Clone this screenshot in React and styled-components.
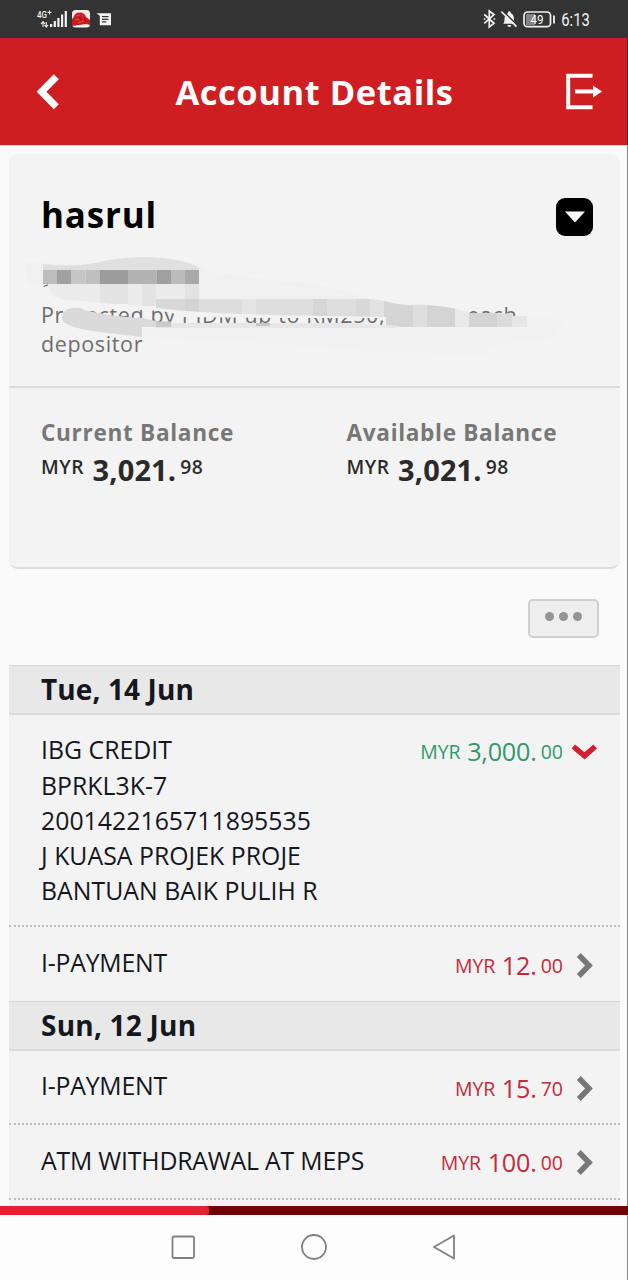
import React from "react";
import styled, { createGlobalStyle } from "styled-components";

const GlobalStyle = createGlobalStyle`
  * { box-sizing: border-box; }
  html, body { margin: 0; padding: 0; }
  body { background: #fafafa; font-family: "Open Sans", "Noto Sans", sans-serif; }
`;

const Screen = styled.div`
  width: 628px;
  height: 1280px;
  display: flex;
  flex-direction: column;
  overflow: hidden;
  background: #fafafa;
`;

const StatusBar = styled.div`
  height: 38px;
  flex: none;
  display: flex;
  justify-content: space-between;
  background: #333333;
`;

const StatusSvg = styled.svg`
  display: block;
  font-family: Roboto, sans-serif;
`;

const Header = styled.header`
  height: 107px;
  flex: none;
  display: flex;
  align-items: center;
  justify-content: space-between;
  padding: 0 25px 0 37px;
  background: #cf1e21;
  border-right: 1px solid #7d1316;
`;

const Title = styled.h1`
  margin: 0 0 0 3px;
  color: #fff;
  font-size: 34.5px;
  line-height: 46px;
  font-weight: 700;
  letter-spacing: 0.55px;
`;

const HeaderIcon = styled.svg`
  display: block;
  margin-top: 1px;
`;

const Content = styled.main`
  flex: 1;
  min-height: 0;
  overflow: hidden;
  padding: 8px 7px 0 9px;
  border-top: 1px solid #ffd4d6;
  border-right: 1px solid #808080;
`;

const Card = styled.section`
  position: relative;
  height: 415px;
  background: #f3f3f3;
  border-radius: 9px;
  border-bottom: 2px solid #dcdcdc;
`;

const CardTop = styled.div`
  height: 234px;
  padding: 36px 27px 0 32px;
  border-bottom: 2px solid #dcdcdc;
`;

const NameRow = styled.div`
  display: flex;
  justify-content: space-between;
  align-items: flex-start;
`;

const Name = styled.h2`
  margin: 0;
  color: #000;
  font-size: 35px;
  line-height: 50px;
  font-weight: 700;
  letter-spacing: 0.8px;
`;

const DropButton = styled.button`
  width: 37px;
  height: 38px;
  margin-top: 8px;
  padding: 0;
  border: 0;
  border-radius: 9px;
  background: #000;
  display: flex;
  align-items: center;
  justify-content: center;
`;

const Protection = styled.p`
  margin: 60px 0 0;
  width: 490px;
  white-space: nowrap;
  color: #6e6e6e;
  font-size: 21.5px;
  line-height: 29px;
  letter-spacing: 0.63px;
`;

const Smudge = styled.svg`
  position: absolute;
  left: 11px;
  top: 96px;
  pointer-events: none;
`;

const Balances = styled.div`
  display: grid;
  grid-template-columns: 305.5px 1fr;
  padding: 28px 0 0 32px;
`;

const BalanceLabel = styled.div`
  color: #777777;
  font-size: 22.6px;
  line-height: 34px;
  font-weight: 700;
  letter-spacing: 0.68px;
`;

const Amount = styled.div`
  display: flex;
  align-items: flex-start;
  white-space: nowrap;
  color: ${(p) => p.$color};
`;

const Small = styled.span`
  font-size: ${(p) => (p.$strong ? 19.3 : 19.5)}px;
  font-weight: ${(p) => (p.$strong ? 600 : 400)};
  line-height: 28px;
  padding-top: ${(p) => (p.$strong ? 3 : 5)}px;
  letter-spacing: ${(p) => (p.$strong ? 0.5 : 0)}px;
`;

const Big = styled.span`
  font-size: ${(p) => (p.$strong ? 29 : 25.2)}px;
  font-weight: ${(p) => (p.$strong ? 700 : 400)};
  line-height: ${(p) => (p.$strong ? 40 : 36)}px;
  margin: 0 4px 0 ${(p) => (p.$strong ? 8.5 : 6.5)}px;
  letter-spacing: ${(p) => (p.$strong ? 0.15 : -0.2)}px;
`;

const Toolbar = styled.div`
  height: 96px;
  display: flex;
  justify-content: flex-end;
  padding: 30px 21px 0 0;
`;

const MoreButton = styled.button`
  width: 71px;
  height: 39px;
  padding: 0 0 4px;
  border: 2px solid #cfcfcf;
  border-radius: 5px;
  background: #eeeeee;
  display: flex;
  align-items: center;
  justify-content: center;
  gap: 5px;
`;

const Dot = styled.span`
  width: 9px;
  height: 9px;
  border-radius: 50%;
  background: #949494;
`;

const DateBar = styled.div`
  height: 50px;
  padding-left: 32px;
  border-top: 1px solid #d6d6d6;
  border-bottom: 2px solid #dbdbdb;
  background: #e8e8e8;
  color: #15171e;
  font-size: 28px;
  line-height: 47px;
  font-weight: 700;
  letter-spacing: ${(p) => p.$track}px;
`;

const Row = styled.div`
  display: flex;
  justify-content: space-between;
  align-items: flex-start;
  height: ${(p) => p.$height}px;
  padding: ${(p) => p.$top}px 23px 0 32px;
  background: #f3f3f3;
  border-bottom: ${(p) => (p.$last ? "0" : "2px dotted #bdbdbd")};
`;

const Desc = styled.div`
  color: #15171e;
  font-size: 24.8px;
  line-height: 35.2px;
  letter-spacing: ${(p) => p.$track}px;
  white-space: pre;
`;

const RowEnd = styled.div`
  display: flex;
  align-items: flex-start;
  padding-top: ${(p) => p.$drop}px;
`;

const Chevron = styled.svg`
  display: block;
  width: 27px;
  height: 27px;
  margin: 5px 0 0 7px;
`;

const ListTail = styled.div`
  height: 8px;
  background: #f3f3f3;
`;

const Progress = styled.div`
  flex: none;
  height: 9px;
  background: #700004;
`;

const ProgressFill = styled.div`
  width: 209px;
  height: 9px;
  background: #e81f2c;
  border-radius: 0 3px 3px 0;
`;

const NavBar = styled.nav`
  flex: none;
  height: 65px;
  display: flex;
  align-items: center;
  justify-content: center;
  gap: 104px;
  padding-bottom: 1px;
  background: #fdfdfd;
  border-right: 1px solid #858585;
`;

const GREEN = "#2f9a68";
const RED = "#c42a38";

function Money({ whole, cents, color, strong }) {
  return (
    <Amount $color={color}>
      <Small $strong={strong}>MYR</Small>
      <Big $strong={strong}>{whole}.</Big>
      <Small $strong={strong}>{cents}</Small>
    </Amount>
  );
}

function Transaction({ lines, whole, cents, credit, height, top, last, track = 0, drop = 1 }) {
  return (
    <Row $height={height} $top={top} $last={last}>
      <Desc $track={track}>{lines.join("\n")}</Desc>
      <RowEnd $drop={drop}>
        <Money whole={whole} cents={cents} color={credit ? GREEN : RED} />
        <Chevron viewBox="0 0 27 27" fill="none" strokeWidth="5.5">
          {credit ? (
            <path d="M3.300 8.500 14.500 17.800 25.200 8.500" stroke="#d51f2f" />
          ) : (
            <path d="M8.800 3 19 13.500 8.800 24" stroke="#777" />
          )}
        </Chevron>
      </RowEnd>
    </Row>
  );
}

function StatusLeft() {
  return (
    <StatusSvg width="130" height="38" viewBox="0 0 130 38" fill="#f2f2f2">
      <text x="37" y="18.300" fontSize="9.800" fontWeight="500" textLength="10" lengthAdjust="spacingAndGlyphs">4G</text>
      <path d="M47.500 12.400h4M49.500 10.400v4" stroke="#f2f2f2" strokeWidth="1" />
      <path d="M43 22v5M41 24l2-2.400 2 2.400M46.300 22v5M44.500 25l1.800 2.200 1.800-2.200" stroke="#f2f2f2" strokeWidth="1.100" fill="none" />
      <path d="M50 24h2.200v3H50zM53.700 21h2.200v6h-2.200zM57.300 18h2.200v9h-2.200zM61 14.500h2.200V27H61zM64.700 11h2.200v16h-2.200z" />
      <rect x="72" y="10" width="18" height="17.500" rx="3.500" fill="#f6eceb" />
      <path d="M72 19c2-1 2-5 5-6 4-1.500 8 0 9 4l4 3v5l-4-1-10 1.500-4 .5z" fill="#cb1a1e" />
      <path d="M76 16l4-1M75 20l5-1M82 14l2 5M78 23l6-2" stroke="#e8504d" strokeWidth="1" />
      <path d="M83 17c2 1 3 3 2 5M79 17l2 3" stroke="#8e0f13" strokeWidth="1" fill="none" />
      <path d="M76 26.200h3M80.500 26.200h3M85 26.200h2" stroke="#fff" strokeWidth="1.400" />
      <path d="M96.500 13.200H111v12H99.800v-9.500z" />
      <path d="M102 16.700h6.500M102 19.300h6.500M102 21.900h4.200" stroke="#333" strokeWidth="1.200" />
    </StatusSvg>
  );
}

function StatusRight() {
  return (
    <StatusSvg width="152" height="38" viewBox="476 0 152 38" fill="none" stroke="#f2f2f2">
      <path d="M484.300 14.500 494 23.300 489.300 27V11l4.700 3.600-9.700 8.800" strokeWidth="1.700" />
      <path d="M483.800 19h1.600M493.600 19h1.600" strokeWidth="1.500" />
      <path d="M503.200 23.700c1-1.200 1.300-2.200 1.300-4.700 0-3.200 1.500-5.200 3.300-5.800 0-2.500 3-2.500 3 0 2 .6 3.200 2.600 3.200 5.800 0 2.500.3 3.500 1.700 4.700z" fill="#f2f2f2" stroke="none" />
      <path d="M507.300 25h4c-.3 2.500-3.700 2.500-4 0z" fill="#f2f2f2" stroke="none" />
      <path d="M502.600 10.800 517.500 25.300" stroke="#333" strokeWidth="1.600" />
      <path d="M501.300 11.500 516.500 26.700" strokeWidth="1.700" />
      <rect x="526" y="14" width="9" height="11" fill="#858585" stroke="none" />
      <rect x="524" y="12" width="26.500" height="14.700" rx="3.500" strokeWidth="1.700" />
      <path d="M554 15.500v8" strokeWidth="1.800" />
      <text x="530.500" y="23.700" fontSize="12.500" fontWeight="400" fill="#fff" stroke="none" textLength="13" lengthAdjust="spacingAndGlyphs">49</text>
      <text x="561.300" y="26" fontSize="17.800" fontWeight="400" fill="#f2f2f2" stroke="none" textLength="28.500" lengthAdjust="spacingAndGlyphs">6:13</text>
    </StatusSvg>
  );
}

const TOP_TILES = [
  [43, 14, "#bdbdbd"], [57, 14, "#a1a1a1"], [71, 14.5, "#c6c6c6"], [85.5, 14, "#bfbfbf"],
  [99.5, 28.5, "#9c9c9c"], [128, 28.5, "#b3b3b3"], [156.5, 14.5, "#9f9f9f"],
  [171, 14, "#bbbbbb"], [185, 14, "#a9a9a9"],
];

const MID_TILES = [
  [156, 29, "#d8d8d8"], [185, 14, "#d3d3d3"], [199, 43, "#dddddd"], [242, 14, "#e4e4e4"],
  [256, 57, "#dedede"], [313, 14, "#d5d5d5"], [327, 29, "#dedede"], [356, 14, "#d8d8d8"],
  [370, 14, "#e2e2e2"], [384, 29, "#d4d4d4"], [413, 14, "#dedede"], [427, 28, "#d4d4d4"],
  [455, 14, "#e9e9e9"],
];

function SmudgeLayer() {
  return (
    <Smudge width="550" height="120" viewBox="20 250 550 120">
      <defs>
        <clipPath id="mid">
          <path d="M156 299H370C385 300 395 305 410 305C425 304 448 306 469 312V327H386V317L270 315C240 314 200 313 156 308Z" />
        </clipPath>
      </defs>
      <path d="M25 261C60 267 110 264 135 259 165 256 195 263 205 270L235 276 320 285 370 299H199V310L60 300C48 296 46 290 46 285L28 283Z" fill="#f0f0f0" />
      <path d="M43 264C70 267 85 265 100 262V270H43Z" fill="#dedede" />
      <path d="M99.500 262C120 257 150 256 171 259 185 261 193 264 199 268V270H99.500Z" fill="#e0e0e0" />
      {TOP_TILES.map(([x, w, c]) => <rect key={x} x={x} y="270" width={w} height="14" fill={c} />)}
      <path d="M44 284H199V310L60 299C52 295 50 290 50 287H44Z" fill="#ebebeb" />
      <path d="M100 284h28v20h-28zM142 284h14v22h-14zM185 284h14v24h-14z" fill="#e3e3e3" />
      <path d="M43.500 286.500 48 284.800" stroke="#666" strokeWidth="1.200" />
      <path d="M52 299C100 303 130 306 156 306L270 311 386 314V318H280L184 317C172 312 162 311 145 310 105 309.500 95 308 85 308L60 305Z" fill="#f3f3f3" />
      <g clipPath="url(#mid)">
        {MID_TILES.map(([x, w, c]) => <rect key={x} x={x} y="298" width={w} height="30" fill={c} />)}
      </g>
      <path d="M62 318C62 309 70 307 80 308C90 313 120 317 143 318L160 322V327H142V337C110 333 62 330 62 318Z" fill="#dadada" />
      <path d="M156 323H350L400 326 395 328H156Z" fill="#e7e7e7" />
      <path d="M156 321.500h15v5.500h-15zM256 323h14v3h-14z" fill="#c8c8c8" />
      <path d="M469 313H497V327H469Z" fill="#d3d3d3" />
      <path d="M497 313.500h15V327h-15z" fill="#dcdcdc" />
      <path d="M512 316h15v11h-15z" fill="#e6e6e6" />
      <path d="M527 317 563 320 555 338 490 345 485 354 370 352 320 346 190 340 142 335V328H527Z" fill="#f1f1f1" />
    </Smudge>
  );
}

export default function App() {
  return (
    <Screen>
      <GlobalStyle />
      <StatusBar>
        <StatusLeft />
        <StatusRight />
      </StatusBar>
      <Header>
        <HeaderIcon width="24" height="36" viewBox="0 0 24 36" fill="none">
          <path d="M19.300 2.700 4.500 17.700 19.300 32.700" stroke="#fff" strokeWidth="7" />
        </HeaderIcon>
        <Title>Account Details</Title>
        <HeaderIcon width="37" height="38" viewBox="0 0 37 38" fill="none">
          <path d="M27.500 2.800H3.200V34.300H27.500M10 18.500H28" stroke="#fff" strokeWidth="4" />
          <path d="M28 12.500 37 18.500 28 24.500Z" fill="#fff" />
        </HeaderIcon>
      </Header>
      <Content>
        <Card>
          <CardTop>
            <NameRow>
              <Name>hasrul</Name>
              <DropButton aria-label="Select account">
                <svg width="20" height="12" viewBox="0 0 20 12"><path d="M0 .5H20L10 11.500Z" fill="#fff" /></svg>
              </DropButton>
            </NameRow>
            <Protection>
              Protected by PIDM up to RM250,000 for each<br />depositor
            </Protection>
          </CardTop>
          <Balances>
            {["Current Balance", "Available Balance"].map((label) => (
              <div key={label}>
                <BalanceLabel>{label}</BalanceLabel>
                <Money whole="3,021" cents="98" color="#2a2a2a" strong />
              </div>
            ))}
          </Balances>
          <SmudgeLayer />
        </Card>
        <Toolbar>
          <MoreButton aria-label="More options"><Dot /><Dot /><Dot /></MoreButton>
        </Toolbar>
        <DateBar $track={0.1}>Tue, 14 Jun</DateBar>
        <Transaction
          lines={["IBG CREDIT", "BPRKL3K-7", "2001422165711895535", "J KUASA PROJEK PROJE", "BANTUAN BAIK PULIH R"]}
          whole="3,000" cents="00" credit height={212} top={17.4} track={0.03}
        />
        <Transaction lines={["I-PAYMENT"]} whole="12" cents="00" height={74} top={18} track={-0.2} drop={2} last />
        <DateBar $track={0.22}>Sun, 12 Jun</DateBar>
        <Transaction lines={["I-PAYMENT"]} whole="15" cents="70" height={74} top={17} track={-0.2} drop={2} />
        <Transaction lines={["ATM WITHDRAWAL AT MEPS"]} whole="100" cents="00" height={75} top={18} track={-0.18} />
        <ListTail />
      </Content>
      <Progress><ProgressFill /></Progress>
      <NavBar>
        <svg width="26" height="26" viewBox="0 0 26 26" fill="none"><rect x="2.500" y="2.500" width="21.500" height="21.500" rx="1.500" stroke="#808080" strokeWidth="1.800" /></svg>
        <svg width="28" height="28" viewBox="0 0 28 28" fill="none"><circle cx="14" cy="14" r="12" stroke="#808080" strokeWidth="1.800" /></svg>
        <svg width="26" height="28" viewBox="0 0 26 28" fill="none"><path d="M22 2.500V25.500L2 14Z" stroke="#808080" strokeWidth="1.800" strokeLinejoin="round" /></svg>
      </NavBar>
    </Screen>
  );
}
